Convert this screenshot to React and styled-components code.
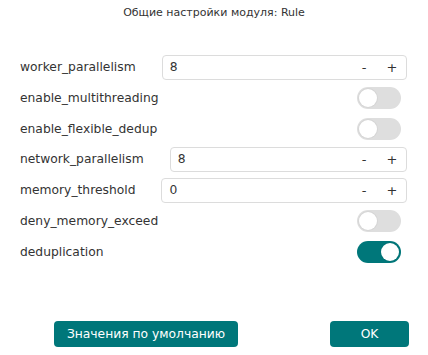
import React, { useState } from 'react';
import styled, { createGlobalStyle } from 'styled-components';

const GlobalStyle = createGlobalStyle`
  body {
    margin: 0;
    background: #fff;
    font-family: 'DejaVu Sans', sans-serif;
    color: #333;
  }
`;

const Dialog = styled.div`
  width: 428px;
  height: 355px;
  display: flex;
  flex-direction: column;
  box-sizing: border-box;
  padding-top: 6px;
`;

const Title = styled.div`
  text-align: center;
  font-size: 11px;
  line-height: 14px;
  color: #333;
`;

const Form = styled.div`
  display: flex;
  flex-direction: column;
  gap: 5.8px;
  margin-top: 34.5px;
  padding: 0 21px 0 20px;
`;

const Row = styled.div`
  display: flex;
  align-items: center;
  height: 25px;
`;

const Label = styled.span`
  font-size: 12.3px;
  color: #333;
  flex: ${p => (p.$grow ? '1' : 'none')};
  margin-right: ${p => (p.$grow ? '0' : '26px')};
`;

const NumberBox = styled.div`
  flex: 1;
  display: flex;
  align-items: center;
  height: 25px;
  box-sizing: border-box;
  border: 1px solid #dcdcdc;
  border-radius: 4px;
  padding-left: 7px;
`;

const Value = styled.span`
  flex: 1;
  font-size: 12.3px;
  color: #333;
`;

const Step = styled.button`
  width: 28px;
  height: 100%;
  border: none;
  background: none;
  padding: 0;
  font-family: 'DejaVu Sans', sans-serif;
  font-size: 13px;
  color: #333;
  cursor: pointer;
`;

const Track = styled.button`
  width: 44px;
  height: 22px;
  margin-right: 6px;
  border: none;
  border-radius: 11px;
  padding: 2px;
  box-sizing: border-box;
  display: flex;
  justify-content: ${p => (p.$on ? 'flex-end' : 'flex-start')};
  background: ${p => (p.$on ? '#00777a' : '#dedede')};
  cursor: pointer;
`;

const Knob = styled.span`
  width: 18px;
  height: 18px;
  border-radius: 50%;
  background: #fff;
  box-shadow: 0 0 0 1px rgba(0, 0, 0, 0.04);
`;

const Footer = styled.div`
  margin-top: auto;
  margin-bottom: 8px;
  display: flex;
  justify-content: space-between;
  padding: 0 19px 0 54px;
`;

const Button = styled.button`
  height: 26px;
  width: ${p => p.$w}px;
  border: none;
  border-radius: 4px;
  background: #00777a;
  color: #fff;
  font-family: 'DejaVu Sans', sans-serif;
  font-size: 12.3px;
  cursor: pointer;
`;

const NumberRow = ({ label, value }) => (
  <Row>
    <Label>{label}</Label>
    <NumberBox>
      <Value>{value}</Value>
      <Step>-</Step>
      <Step>+</Step>
    </NumberBox>
  </Row>
);

const ToggleRow = ({ label, on }) => {
  const [checked, setChecked] = useState(on);
  return (
    <Row>
      <Label $grow>{label}</Label>
      <Track $on={checked} onClick={() => setChecked(!checked)}>
        <Knob />
      </Track>
    </Row>
  );
};

export default function App() {
  return (
    <>
      <GlobalStyle />
      <Dialog>
        <Title>Общие настройки модуля: Rule</Title>
        <Form>
          <NumberRow label="worker_parallelism" value="8" />
          <ToggleRow label="enable_multithreading" on={false} />
          <ToggleRow label="enable_flexible_dedup" on={false} />
          <NumberRow label="network_parallelism" value="8" />
          <NumberRow label="memory_threshold" value="0" />
          <ToggleRow label="deny_memory_exceed" on={false} />
          <ToggleRow label="deduplication" on={true} />
        </Form>
        <Footer>
          <Button $w={184}>Значения по умолчанию</Button>
          <Button $w={79}>OK</Button>
        </Footer>
      </Dialog>
    </>
  );
}
